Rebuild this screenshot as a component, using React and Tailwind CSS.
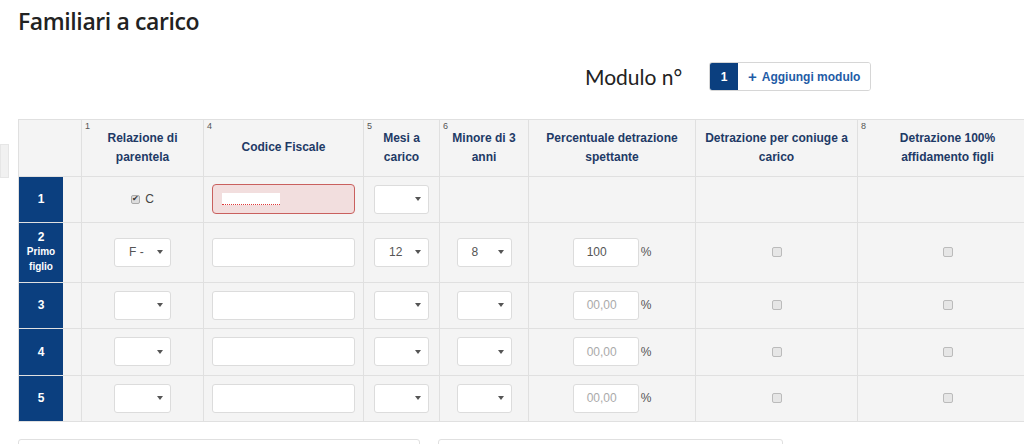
import React from "react";

const cols = [63, 122, 160, 76, 89, 167, 162, 180];

function Caret() {
  return <span className="inline-block w-0 h-0 border-l-[3px] border-r-[3px] border-t-[4px] border-l-transparent border-r-transparent border-t-[#555]" />;
}

function Select({ w = "w-[57px]", value = "" }) {
  return (
    <div className={`${w} h-[29px] mx-auto bg-white border border-[#dcdcdc] rounded-[3px] flex items-center justify-between pl-[14px] pr-[7px] text-[12px] text-[#555]`}>
      <span>{value}</span>
      <Caret />
    </div>
  );
}

function TextBox() {
  return <div className="w-[143px] h-[29px] mx-auto bg-white border border-[#dcdcdc] rounded-[3px]" />;
}

function Percent({ value }) {
  return (
    <div className="flex items-center justify-center">
      <div className={`w-[66px] h-[29px] bg-white border border-[#dcdcdc] rounded-[3px] flex items-center pl-[13px] text-[12px] ${value ? "text-[#555]" : "text-[#aaa]"}`}>
        {value || "00,00"}
      </div>
      <span className="ml-[2px] text-[12px] text-[#555]">%</span>
    </div>
  );
}

function Box() {
  return <div className="w-[10px] h-[10px] mx-auto rounded-[2px] border border-[#bbb] bg-[#e6e6e6]" />;
}

function RowLabel({ h, children }) {
  return (
    <td className="p-0 border border-[#e0e0e0] bg-[#f4f4f4] align-top">
      <div className={`${h} w-[44px] bg-[#0b3f7f] text-white font-bold flex flex-col items-center justify-center`}>
        {children}
      </div>
    </td>
  );
}

const cell = "border border-[#e0e0e0] bg-[#f4f4f4] p-0 align-middle text-center";

export default function App() {
  const headers = [
    { n: "", t: "" },
    { n: "1", t: <>Relazione di<br />parentela</> },
    { n: "4", t: "Codice Fiscale" },
    { n: "5", t: <>Mesi a<br />carico</> },
    { n: "6", t: <>Minore di 3<br />anni</> },
    { n: "", t: <>Percentuale detrazione<br />spettante</> },
    { n: "", t: <>Detrazione per coniuge a<br />carico</> },
    { n: "8", t: <>Detrazione 100%<br />affidamento figli</> },
  ];

  const empties = ["3", "4", "5"];
  const heights = ["h-[45px]", "h-[46px]", "h-[45px]"];

  return (
    <div className="w-[1024px] h-[444px] overflow-hidden bg-white relative font-['Liberation_Sans',Arial,sans-serif]">
      <div className="absolute left-0 top-[144px] w-[9px] h-[34px] bg-[#f1f1f1] border border-[#e6e6e6]" />
      <h1 className="pl-[18px] pt-[5px] text-[23px] leading-[32px] text-[#222] font-semibold font-['Open_Sans',sans-serif] tracking-[-0.4px]">Familiari a carico</h1>

      <div className="flex items-center mt-[24px] pl-[585px]">
        <span className="text-[21px] text-[#222] font-['Lato',sans-serif] w-[124px]">Modulo n°</span>
        <div className="flex h-[29px] rounded-[3px] border border-[#d6d6d6] overflow-hidden">
          <div className="w-[28px] bg-[#0b3f7f] text-white text-[12px] font-bold flex items-center justify-center">1</div>
          <div className="px-[10px] flex items-center gap-[5px] text-[12px] font-bold text-[#1f5ca6] bg-white">
            <span className="text-[15px] leading-none">+</span>
            <span>Aggiungi modulo</span>
          </div>
        </div>
      </div>

      <table className="ml-[18px] mt-[26px] border-collapse table-fixed w-[1019px]">
        <colgroup>
          {cols.map((c, i) => (
            <col key={i} style={{ width: c }} />
          ))}
        </colgroup>
        <thead>
          <tr className="h-[57px]">
            {headers.map((h, i) => (
              <th key={i} className={`${cell} relative text-[12px] font-bold leading-[19px] text-[#1e3a66]`}>
                {h.n && <span className="absolute left-[3px] top-[2px] text-[9px] font-normal text-[#555] leading-none">{h.n}</span>}
                {h.t}
              </th>
            ))}
          </tr>
        </thead>
        <tbody>
          <tr className="h-[45px]">
            <RowLabel h="h-[45px]"><span className="text-[12px]">1</span></RowLabel>
            <td className={cell}>
              <div className="flex items-center justify-center gap-[5px] text-[12px] text-[#444]">
                <span className="w-[9px] h-[9px] rounded-[2px] bg-[#ddd] border border-[#aaa] flex items-center justify-center text-[8px] leading-none text-[#333]">✔</span>
                <span>C</span>
              </div>
            </td>
            <td className={cell}>
              <div className="w-[143px] h-[30px] mx-auto bg-[#f2dede] border border-[#c9605e] rounded-[4px] flex items-center pl-[9px]">
                <div className="w-[58px] h-[12px] bg-white border-b border-dotted border-[#e03a3a]" />
              </div>
            </td>
            <td className={cell}><Select w="w-[55px]" /></td>
            <td className={cell}></td>
            <td className={cell}></td>
            <td className={cell}></td>
            <td className={cell}></td>
          </tr>
          <tr className="h-[59px]">
            <RowLabel h="h-[59px]">
              <span className="text-[12px] leading-[14px]">2</span>
              <span className="text-[10px] leading-[16px]">Primo</span>
              <span className="text-[10px] leading-[14px]">figlio</span>
            </RowLabel>
            <td className={cell}><Select value="F -" /></td>
            <td className={cell}><TextBox /></td>
            <td className={cell}><Select w="w-[55px]" value="12" /></td>
            <td className={cell}><Select w="w-[55px]" value="8" /></td>
            <td className={cell}><Percent value="100" /></td>
            <td className={cell}><Box /></td>
            <td className={cell}><Box /></td>
          </tr>
          {empties.map((n, i) => (
            <tr key={n} className={heights[i]}>
              <RowLabel h={heights[i]}><span className="text-[12px]">{n}</span></RowLabel>
              <td className={cell}><Select /></td>
              <td className={cell}><TextBox /></td>
              <td className={cell}><Select w="w-[55px]" /></td>
              <td className={cell}><Select w="w-[55px]" /></td>
              <td className={cell}><Percent /></td>
              <td className={cell}><Box /></td>
              <td className={cell}><Box /></td>
            </tr>
          ))}
        </tbody>
      </table>

      <div className="flex gap-[18px] ml-[18px] mt-[17px]">
        <div className="w-[402px] h-[20px] border border-[#e0e0e0] rounded-[3px]" />
        <div className="w-[345px] h-[20px] border border-[#e0e0e0] rounded-[3px]" />
      </div>
    </div>
  );
}
